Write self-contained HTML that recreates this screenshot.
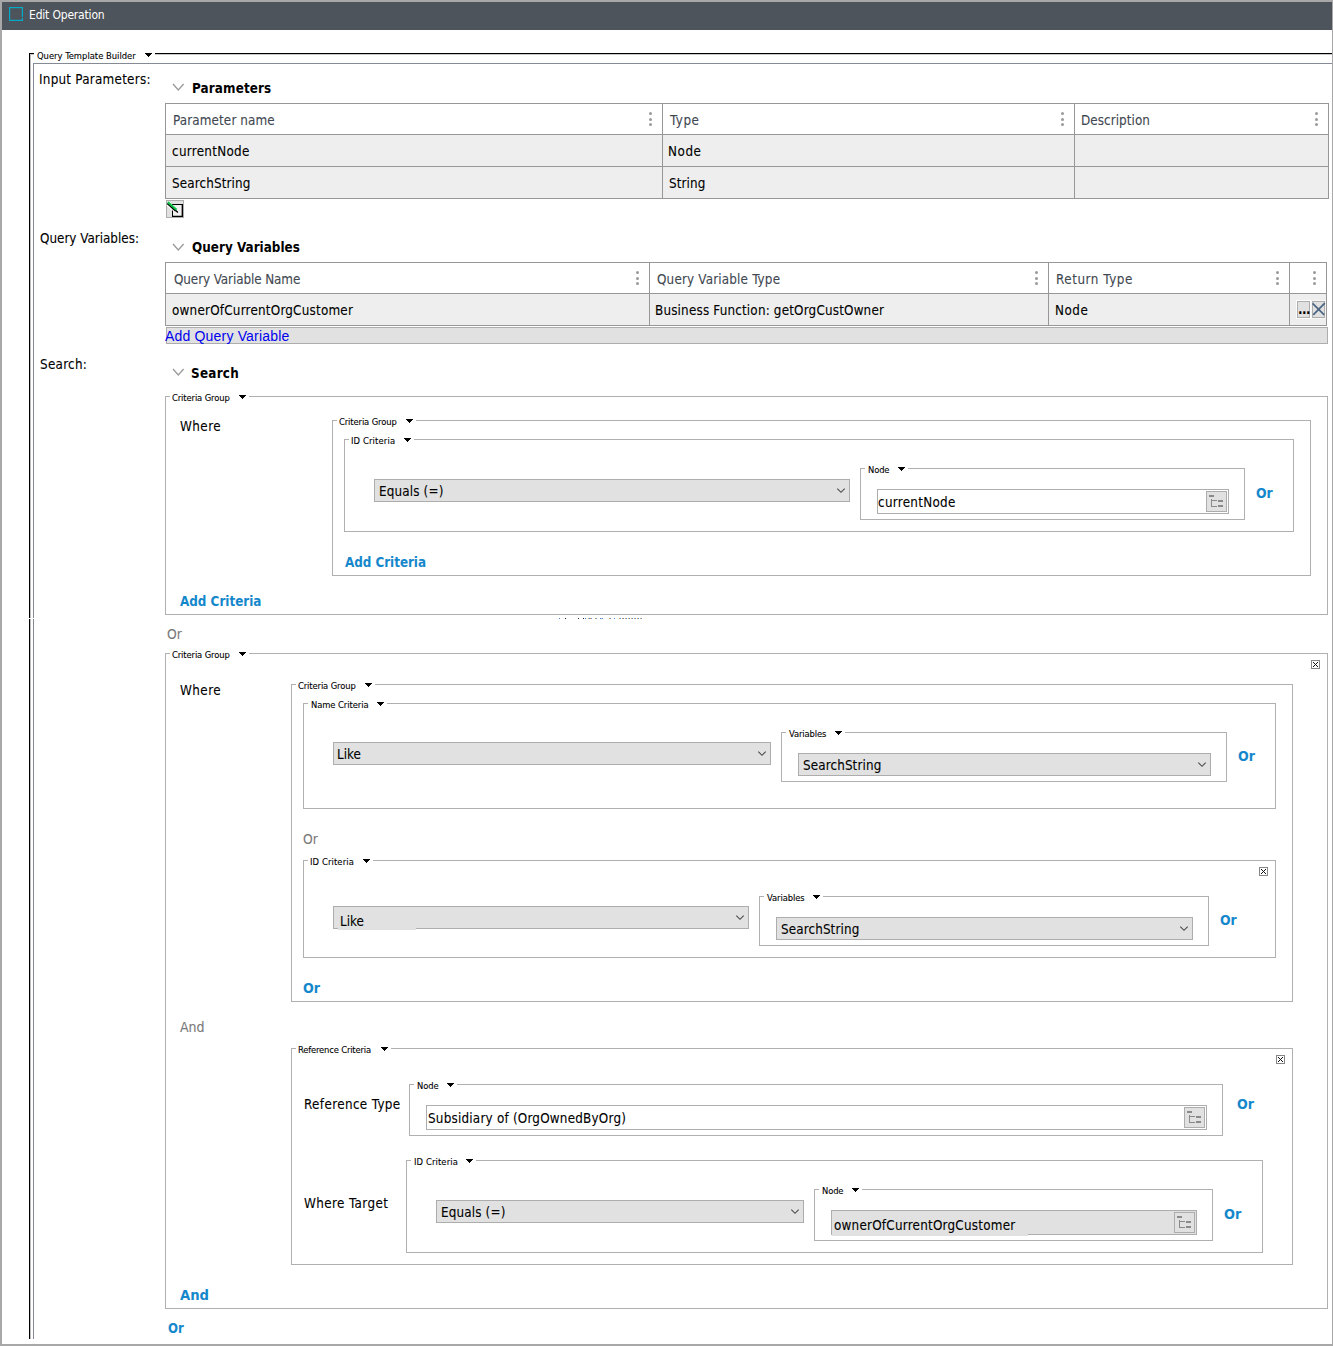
<!DOCTYPE html>
<html lang="en"><head><meta charset="utf-8"><title>Edit Operation</title>
<style>
html,body{margin:0;padding:0;background:#fff;}
body{width:1333px;height:1346px;position:relative;overflow:hidden;font-family:"DejaVu Sans Condensed","Liberation Sans",sans-serif;}
.a{position:absolute;box-sizing:content-box;}
.t{position:absolute;white-space:nowrap;height:20px;line-height:0;}
.t i{display:inline-block;width:0;height:20px;}
.b{-webkit-text-stroke:0.09px currentColor;}
.lg{-webkit-text-stroke:0.1px currentColor;}
.dot{width:3px;height:3px;border-radius:50%;background:#9a9a9a;}
svg{overflow:visible;}
</style></head>
<body>
<div class="a" style="left:0px;top:0px;width:1333px;height:2px;background:#a8a8a8;"></div>
<div class="a" style="left:0px;top:0px;width:2px;height:1346px;background:#a8a8a8;"></div>
<div class="a" style="left:1332px;top:0px;width:1px;height:1346px;background:#a8a8a8;"></div>
<div class="a" style="left:0px;top:1344px;width:1333px;height:2px;background:#a8a8a8;"></div>
<div class="a title" style="left:2px;top:2px;width:1330px;height:28px;background:#4d545b;"></div>
<svg class="a" style="left:9px;top:7px" width="14" height="14" viewBox="0 0 14 14"><rect x="0.6" y="0.6" width="12.8" height="12.8" fill="none" stroke="#00aac8" stroke-width="1.2"/><rect x="12.3" y="9.9" width="1.8" height="0.9" fill="#4d545b"/></svg>
<div class="a" style="left:29px;top:53px;width:1px;height:1286px;background:#000;"></div>
<div class="a" style="left:30px;top:54px;width:1px;height:1285px;background:#bdbdbd;"></div>
<div class="a" style="left:29px;top:53px;width:5px;height:1px;background:#000;"></div>
<div class="a" style="left:155px;top:53px;width:1177px;height:1px;background:#000;"></div>
<div class="a" style="left:30px;top:54px;width:4px;height:1px;background:#c8c8c8;"></div>
<div class="a" style="left:155px;top:54px;width:1177px;height:1px;background:#c8c8c8;"></div>
<svg class="a" style="left:144px;top:53px" width="8" height="4" viewBox="0 0 8 4" shape-rendering="crispEdges"><path d="M0 0H8L4.0 4Z" fill="#000"/></svg>
<div class="a" style="left:33px;top:63px;width:1px;height:1276px;background:#858b96;"></div>
<div class="a" style="left:33px;top:63px;width:1299px;height:1px;background:#858b96;"></div>
<div class="a" style="left:29px;top:618px;width:6px;height:1px;background:#fff;"></div>
<svg class="a" style="left:171.6px;top:83px" width="13" height="9" viewBox="-1 -1 13 9"><path d="M0 0L5.3 6L10.6 0" fill="none" stroke="#9a9a9a" stroke-width="1.3"/></svg>
<svg class="a" style="left:171.6px;top:242.5px" width="13" height="9" viewBox="-1 -1 13 9"><path d="M0 0L5.3 6L10.6 0" fill="none" stroke="#9a9a9a" stroke-width="1.3"/></svg>
<svg class="a" style="left:171.6px;top:368px" width="13" height="9" viewBox="-1 -1 13 9"><path d="M0 0L5.3 6L10.6 0" fill="none" stroke="#9a9a9a" stroke-width="1.3"/></svg>
<div class="a tbl" style="left:165px;top:103px;width:1162px;height:94px;background:#fff;border:1px solid #979797;"></div>
<div class="a" style="left:166px;top:135px;width:1162px;height:63px;background:#eeeeee;"></div>
<div class="a" style="left:165px;top:134px;width:1164px;height:1px;background:#979797;"></div>
<div class="a" style="left:165px;top:166px;width:1164px;height:1px;background:#979797;"></div>
<div class="a" style="left:662px;top:103px;width:1px;height:96px;background:#979797;"></div>
<div class="a" style="left:1074px;top:103px;width:1px;height:96px;background:#979797;"></div>
<div class="a dot" style="left:649.3px;top:112.0px"></div>
<div class="a dot" style="left:649.3px;top:117.5px"></div>
<div class="a dot" style="left:649.3px;top:123.0px"></div>
<div class="a dot" style="left:1061.3px;top:112.0px"></div>
<div class="a dot" style="left:1061.3px;top:117.5px"></div>
<div class="a dot" style="left:1061.3px;top:123.0px"></div>
<div class="a dot" style="left:1315.3px;top:112.0px"></div>
<div class="a dot" style="left:1315.3px;top:117.5px"></div>
<div class="a dot" style="left:1315.3px;top:123.0px"></div>
<div class="a btn" style="left:166px;top:200px;width:16px;height:16px;background:#e1e1e1;border:1px solid #adadad;"></div>
<svg class="a" style="left:166px;top:200px" width="18" height="18" viewBox="0 0 18 18"><rect x="6.5" y="4.5" width="10" height="12" fill="#f0f0f0" stroke="#000" stroke-width="1"/><path d="M16.3 4.5V16.7M6.5 16.4H16.7" stroke="#000" stroke-width="1.3" fill="none"/><path d="M0.9 4.9L7.0 10.3" stroke="#fff" stroke-width="1.3"/><path d="M1.2 3.5L9.6 10.9" stroke="#000" stroke-width="1.4"/><path d="M1.9 2.2L10.5 9.8" stroke="#00c03c" stroke-width="2.1"/><path d="M2.5 1.9L10.6 9.0" stroke="#4fdc80" stroke-width="0.6"/><path d="M9.4 10.3L11.9 12.5" stroke="#000" stroke-width="1.5"/></svg>
<div class="a tbl" style="left:165px;top:262px;width:1160px;height:62px;background:#fff;border:1px solid #979797;"></div>
<div class="a" style="left:166px;top:294px;width:1160px;height:31px;background:#eeeeee;"></div>
<div class="a" style="left:165px;top:293px;width:1162px;height:1px;background:#979797;"></div>
<div class="a" style="left:649px;top:262px;width:1px;height:64px;background:#979797;"></div>
<div class="a" style="left:1048px;top:262px;width:1px;height:64px;background:#979797;"></div>
<div class="a" style="left:1289px;top:262px;width:1px;height:64px;background:#979797;"></div>
<div class="a dot" style="left:635.9px;top:271.0px"></div>
<div class="a dot" style="left:635.9px;top:276.5px"></div>
<div class="a dot" style="left:635.9px;top:282.0px"></div>
<div class="a dot" style="left:1034.7px;top:271.0px"></div>
<div class="a dot" style="left:1034.7px;top:276.5px"></div>
<div class="a dot" style="left:1034.7px;top:282.0px"></div>
<div class="a dot" style="left:1275.9px;top:271.0px"></div>
<div class="a dot" style="left:1275.9px;top:276.5px"></div>
<div class="a dot" style="left:1275.9px;top:282.0px"></div>
<div class="a dot" style="left:1312.8px;top:271.0px"></div>
<div class="a dot" style="left:1312.8px;top:276.5px"></div>
<div class="a dot" style="left:1312.8px;top:282.0px"></div>
<div class="a" style="left:1296px;top:300px;width:15px;height:19px;background:#fff;"></div>
<div class="a" style="left:1311px;top:300px;width:15px;height:19px;background:#f6f6f6;"></div>
<div class="a btn" style="left:1297px;top:301px;width:11px;height:15px;background:#e1e1e1;border:1px solid #adadad;"></div>
<div class="a btn" style="left:1312px;top:301px;width:11px;height:15px;background:#e1e1e1;border:1px solid #adadad;"></div>
<svg class="a" style="left:1311px;top:300px" width="16" height="19" viewBox="0 0 16 19"><path d="M1.6 3.4L13.2 14.8" stroke="#4a6482" stroke-width="1.7"/><path d="M13.8 3.1L2.2 14.8" stroke="#4a6482" stroke-width="1.7"/></svg>
<div class="a bar" style="left:166px;top:327px;width:1160px;height:15px;background:#e1e1e1;border:1px solid #adadad;"></div>
<div class="a fs" style="left:165px;top:396px;width:1161px;height:217px;border:1px solid #b0b0b0;"></div>
<div class="a" style="left:170px;top:396px;width:79px;height:1px;background:#fff;"></div>
<svg class="a" style="left:238px;top:395px" width="8" height="4" viewBox="0 0 8 4" shape-rendering="crispEdges"><path d="M0 0H8L4.0 4Z" fill="#000"/></svg>
<div class="a fs" style="left:332px;top:420px;width:977px;height:154px;border:1px solid #b0b0b0;"></div>
<div class="a" style="left:337px;top:420px;width:79px;height:1px;background:#fff;"></div>
<svg class="a" style="left:405px;top:419px" width="8" height="4" viewBox="0 0 8 4" shape-rendering="crispEdges"><path d="M0 0H8L4.0 4Z" fill="#000"/></svg>
<div class="a fs" style="left:344px;top:439px;width:948px;height:91px;border:1px solid #b0b0b0;"></div>
<div class="a" style="left:349px;top:439px;width:65px;height:1px;background:#fff;"></div>
<svg class="a" style="left:403px;top:438px" width="8" height="4" viewBox="0 0 8 4" shape-rendering="crispEdges"><path d="M0 0H8L4.0 4Z" fill="#000"/></svg>
<div class="a sel" style="left:374px;top:479px;width:474px;height:21px;background:#e1e1e1;border:1px solid #adadad;"></div>
<svg class="a" style="left:837px;top:488px" width="8" height="5" viewBox="0 0 8 5"><path d="M0.3 0.6L4.0 4.3L7.7 0.6" fill="none" stroke="#4a4a4a" stroke-width="1.1"/></svg>
<div class="a fs" style="left:860px;top:468px;width:383px;height:50px;border:1px solid #b0b0b0;"></div>
<div class="a" style="left:865px;top:468px;width:43px;height:1px;background:#fff;"></div>
<svg class="a" style="left:897px;top:467px" width="8" height="4" viewBox="0 0 8 4" shape-rendering="crispEdges"><path d="M0 0H8L4.0 4Z" fill="#000"/></svg>
<div class="a inp" style="left:877px;top:489px;width:350px;height:23px;background:#fff;border:1px solid #adadad;"></div>
<div class="a btn" style="left:1206px;top:491px;width:19px;height:19px;background:#e1e1e1;border:1px solid #adadad;"></div>
<svg class="a" style="left:1206px;top:491px" width="21" height="21" viewBox="0 0 21 21" shape-rendering="crispEdges"><g fill="#8a8a8a"><rect x="3" y="4" width="5" height="2"/><rect x="5" y="8" width="1" height="8"/><rect x="5" y="9" width="6" height="1"/><rect x="5" y="15" width="6" height="1"/><rect x="12" y="9" width="5" height="2"/><rect x="12" y="14" width="5" height="2"/></g></svg>
<div class="a" style="left:559px;top:618px;width:1px;height:1px;background:#4a86d8;"></div>
<div class="a" style="left:565px;top:618px;width:1px;height:1px;background:#222;"></div>
<div class="a" style="left:578px;top:618px;width:1px;height:1px;background:#3a1a1a;"></div>
<div class="a" style="left:583px;top:618px;width:1px;height:1px;background:#222;"></div>
<div class="a" style="left:585px;top:618px;width:1px;height:1px;background:#4a86d8;"></div>
<div class="a" style="left:609px;top:618px;width:1px;height:1px;background:#d9a066;"></div>
<div class="a" style="left:610px;top:618px;width:1px;height:1px;background:#5a8fd0;"></div>
<div class="a" style="left:614px;top:618px;width:1px;height:1px;background:#5a8fd0;"></div>
<div class="a" style="left:595px;top:618px;width:1px;height:1px;background:#d9a066;"></div>
<div class="a" style="left:596px;top:618px;width:1px;height:1px;background:#5a8fd0;"></div>
<div class="a" style="left:588px;top:618px;width:4px;height:1px;background:repeating-linear-gradient(90deg,#d9a066 0 1px,#5a8fd0 1px 2px);"></div>
<div class="a" style="left:600px;top:618px;width:3px;height:1px;background:repeating-linear-gradient(90deg,#5a8fd0 0 1px,#9bb8e0 1px 2px);"></div>
<div class="a" style="left:619px;top:618px;width:24px;height:1px;background:repeating-linear-gradient(90deg,#d9a066 0 1px,#5a8fd0 1px 2px,#fff 2px 3px);"></div>
<div class="a fs" style="left:165px;top:653px;width:1161px;height:654px;border:1px solid #b0b0b0;"></div>
<div class="a" style="left:170px;top:653px;width:79px;height:1px;background:#fff;"></div>
<svg class="a" style="left:238px;top:652px" width="8" height="4" viewBox="0 0 8 4" shape-rendering="crispEdges"><path d="M0 0H8L4.0 4Z" fill="#000"/></svg>
<svg class="a" style="left:1311px;top:660px" width="9" height="9" viewBox="0 0 9 9" shape-rendering="crispEdges"><rect x="0.5" y="0.5" width="8" height="8" fill="#fff" stroke="#868686" stroke-width="1"/><g fill="#111"><rect x="2" y="2" width="1" height="1"/><rect x="6" y="2" width="1" height="1"/><rect x="3" y="3" width="1" height="1"/><rect x="5" y="3" width="1" height="1"/><rect x="4" y="4" width="1" height="1"/><rect x="4" y="4" width="1" height="1"/><rect x="5" y="5" width="1" height="1"/><rect x="3" y="5" width="1" height="1"/><rect x="6" y="6" width="1" height="1"/><rect x="2" y="6" width="1" height="1"/></g></svg>
<div class="a fs" style="left:291px;top:684px;width:1000px;height:316px;border:1px solid #b0b0b0;"></div>
<div class="a" style="left:296px;top:684px;width:79px;height:1px;background:#fff;"></div>
<svg class="a" style="left:364px;top:683px" width="8" height="4" viewBox="0 0 8 4" shape-rendering="crispEdges"><path d="M0 0H8L4.0 4Z" fill="#000"/></svg>
<div class="a fs" style="left:303px;top:703px;width:971px;height:104px;border:1px solid #b0b0b0;"></div>
<div class="a" style="left:308px;top:703px;width:79px;height:1px;background:#fff;"></div>
<svg class="a" style="left:376px;top:702px" width="8" height="4" viewBox="0 0 8 4" shape-rendering="crispEdges"><path d="M0 0H8L4.0 4Z" fill="#000"/></svg>
<div class="a sel" style="left:333px;top:742px;width:436px;height:21px;background:#e1e1e1;border:1px solid #adadad;"></div>
<svg class="a" style="left:758px;top:751px" width="8" height="5" viewBox="0 0 8 5"><path d="M0.3 0.6L4.0 4.3L7.7 0.6" fill="none" stroke="#4a4a4a" stroke-width="1.1"/></svg>
<div class="a fs" style="left:781px;top:732px;width:444px;height:48px;border:1px solid #b0b0b0;"></div>
<div class="a" style="left:786px;top:732px;width:59px;height:1px;background:#fff;"></div>
<svg class="a" style="left:834px;top:731px" width="8" height="4" viewBox="0 0 8 4" shape-rendering="crispEdges"><path d="M0 0H8L4.0 4Z" fill="#000"/></svg>
<div class="a sel" style="left:798px;top:753px;width:411px;height:21px;background:#e1e1e1;border:1px solid #adadad;"></div>
<svg class="a" style="left:1198px;top:762px" width="8" height="5" viewBox="0 0 8 5"><path d="M0.3 0.6L4.0 4.3L7.7 0.6" fill="none" stroke="#4a4a4a" stroke-width="1.1"/></svg>
<div class="a fs" style="left:303px;top:860px;width:971px;height:96px;border:1px solid #b0b0b0;"></div>
<div class="a" style="left:308px;top:860px;width:65px;height:1px;background:#fff;"></div>
<svg class="a" style="left:362px;top:859px" width="8" height="4" viewBox="0 0 8 4" shape-rendering="crispEdges"><path d="M0 0H8L4.0 4Z" fill="#000"/></svg>
<svg class="a" style="left:1259px;top:867px" width="9" height="9" viewBox="0 0 9 9" shape-rendering="crispEdges"><rect x="0.5" y="0.5" width="8" height="8" fill="#fff" stroke="#868686" stroke-width="1"/><g fill="#111"><rect x="2" y="2" width="1" height="1"/><rect x="6" y="2" width="1" height="1"/><rect x="3" y="3" width="1" height="1"/><rect x="5" y="3" width="1" height="1"/><rect x="4" y="4" width="1" height="1"/><rect x="4" y="4" width="1" height="1"/><rect x="5" y="5" width="1" height="1"/><rect x="3" y="5" width="1" height="1"/><rect x="6" y="6" width="1" height="1"/><rect x="2" y="6" width="1" height="1"/></g></svg>
<div class="a sel" style="left:333px;top:906px;width:414px;height:21px;background:#e1e1e1;border:1px solid #adadad;"></div>
<svg class="a" style="left:736px;top:915px" width="8" height="5" viewBox="0 0 8 5"><path d="M0.3 0.6L4.0 4.3L7.7 0.6" fill="none" stroke="#4a4a4a" stroke-width="1.1"/></svg>
<div class="a" style="left:338px;top:908px;width:78px;height:22px;background:#e1e1e1;"></div>
<div class="a fs" style="left:759px;top:896px;width:448px;height:48px;border:1px solid #b0b0b0;"></div>
<div class="a" style="left:764px;top:896px;width:59px;height:1px;background:#fff;"></div>
<svg class="a" style="left:812px;top:895px" width="8" height="4" viewBox="0 0 8 4" shape-rendering="crispEdges"><path d="M0 0H8L4.0 4Z" fill="#000"/></svg>
<div class="a sel" style="left:776px;top:917px;width:415px;height:21px;background:#e1e1e1;border:1px solid #adadad;"></div>
<svg class="a" style="left:1180px;top:926px" width="8" height="5" viewBox="0 0 8 5"><path d="M0.3 0.6L4.0 4.3L7.7 0.6" fill="none" stroke="#4a4a4a" stroke-width="1.1"/></svg>
<div class="a fs" style="left:291px;top:1048px;width:1000px;height:215px;border:1px solid #b0b0b0;"></div>
<div class="a" style="left:296px;top:1048px;width:95px;height:1px;background:#fff;"></div>
<svg class="a" style="left:380px;top:1047px" width="8" height="4" viewBox="0 0 8 4" shape-rendering="crispEdges"><path d="M0 0H8L4.0 4Z" fill="#000"/></svg>
<svg class="a" style="left:1276px;top:1055px" width="9" height="9" viewBox="0 0 9 9" shape-rendering="crispEdges"><rect x="0.5" y="0.5" width="8" height="8" fill="#fff" stroke="#868686" stroke-width="1"/><g fill="#111"><rect x="2" y="2" width="1" height="1"/><rect x="6" y="2" width="1" height="1"/><rect x="3" y="3" width="1" height="1"/><rect x="5" y="3" width="1" height="1"/><rect x="4" y="4" width="1" height="1"/><rect x="4" y="4" width="1" height="1"/><rect x="5" y="5" width="1" height="1"/><rect x="3" y="5" width="1" height="1"/><rect x="6" y="6" width="1" height="1"/><rect x="2" y="6" width="1" height="1"/></g></svg>
<div class="a fs" style="left:409px;top:1084px;width:812px;height:50px;border:1px solid #b0b0b0;"></div>
<div class="a" style="left:414px;top:1084px;width:43px;height:1px;background:#fff;"></div>
<svg class="a" style="left:446px;top:1083px" width="8" height="4" viewBox="0 0 8 4" shape-rendering="crispEdges"><path d="M0 0H8L4.0 4Z" fill="#000"/></svg>
<div class="a inp" style="left:426px;top:1105px;width:779px;height:23px;background:#fff;border:1px solid #adadad;"></div>
<div class="a btn" style="left:1184px;top:1107px;width:19px;height:19px;background:#e1e1e1;border:1px solid #adadad;"></div>
<svg class="a" style="left:1184px;top:1107px" width="21" height="21" viewBox="0 0 21 21" shape-rendering="crispEdges"><g fill="#8a8a8a"><rect x="3" y="4" width="5" height="2"/><rect x="5" y="8" width="1" height="8"/><rect x="5" y="9" width="6" height="1"/><rect x="5" y="15" width="6" height="1"/><rect x="12" y="9" width="5" height="2"/><rect x="12" y="14" width="5" height="2"/></g></svg>
<div class="a fs" style="left:406px;top:1160px;width:855px;height:91px;border:1px solid #b0b0b0;"></div>
<div class="a" style="left:411px;top:1160px;width:65px;height:1px;background:#fff;"></div>
<svg class="a" style="left:465px;top:1159px" width="8" height="4" viewBox="0 0 8 4" shape-rendering="crispEdges"><path d="M0 0H8L4.0 4Z" fill="#000"/></svg>
<div class="a sel" style="left:436px;top:1200px;width:366px;height:21px;background:#e1e1e1;border:1px solid #adadad;"></div>
<svg class="a" style="left:791px;top:1209px" width="8" height="5" viewBox="0 0 8 5"><path d="M0.3 0.6L4.0 4.3L7.7 0.6" fill="none" stroke="#4a4a4a" stroke-width="1.1"/></svg>
<div class="a fs" style="left:814px;top:1189px;width:397px;height:50px;border:1px solid #b0b0b0;"></div>
<div class="a" style="left:819px;top:1189px;width:43px;height:1px;background:#fff;"></div>
<svg class="a" style="left:851px;top:1188px" width="8" height="4" viewBox="0 0 8 4" shape-rendering="crispEdges"><path d="M0 0H8L4.0 4Z" fill="#000"/></svg>
<div class="a inp" style="left:831px;top:1210px;width:364px;height:23px;background:#e1e1e1;border:1px solid #adadad;"></div>
<div class="a btn" style="left:1174px;top:1212px;width:19px;height:19px;background:#e1e1e1;border:1px solid #adadad;"></div>
<svg class="a" style="left:1174px;top:1212px" width="21" height="21" viewBox="0 0 21 21" shape-rendering="crispEdges"><g fill="#8a8a8a"><rect x="3" y="4" width="5" height="2"/><rect x="5" y="8" width="1" height="8"/><rect x="5" y="9" width="6" height="1"/><rect x="5" y="15" width="6" height="1"/><rect x="12" y="9" width="5" height="2"/><rect x="12" y="14" width="5" height="2"/></g></svg>
<div class="a" style="left:832px;top:1212px;width:196px;height:24px;background:#e1e1e1;"></div>
<span class="t" style="left:29px;top:-1px;font-size:12px;color:#fff;letter-spacing:-0.185px;">Edit Operation<i></i></span>
<span class="t lg" style="left:37px;top:39px;font-size:9.33px;color:#000;">Query Template Builder<i></i></span>
<span class="t b" style="left:39px;top:64px;font-size:13.33px;color:#000;letter-spacing:0.250px;">Input Parameters:<i></i></span>
<span class="t b" style="left:40px;top:223px;font-size:13.33px;color:#000;">Query Variables:<i></i></span>
<span class="t b" style="left:40px;top:349px;font-size:13.33px;color:#000;letter-spacing:0.283px;">Search:<i></i></span>
<span class="t" style="left:192px;top:73px;font-size:13.33px;color:#000;font-weight:bold;letter-spacing:0.122px;">Parameters<i></i></span>
<span class="t" style="left:192px;top:232px;font-size:13.33px;color:#000;font-weight:bold;letter-spacing:0.029px;">Query Variables<i></i></span>
<span class="t" style="left:191px;top:358px;font-size:13.33px;color:#000;font-weight:bold;letter-spacing:0.260px;">Search<i></i></span>
<span class="t b" style="left:173px;top:105px;font-size:13.33px;color:#3f4851;letter-spacing:0.123px;">Parameter name<i></i></span>
<span class="t b" style="left:670px;top:105px;font-size:13.33px;color:#3f4851;letter-spacing:0.550px;">Type<i></i></span>
<span class="t b" style="left:1081px;top:105px;font-size:13.33px;color:#3f4851;letter-spacing:0.060px;">Description<i></i></span>
<span class="t b" style="left:172px;top:136px;font-size:13.33px;color:#000;letter-spacing:0.290px;">currentNode<i></i></span>
<span class="t b" style="left:668px;top:136px;font-size:13.33px;color:#000;letter-spacing:0.550px;">Node<i></i></span>
<span class="t b" style="left:172px;top:168px;font-size:13.33px;color:#000;letter-spacing:0.127px;">SearchString<i></i></span>
<span class="t b" style="left:669px;top:168px;font-size:13.33px;color:#000;letter-spacing:0.120px;">String<i></i></span>
<span class="t b" style="left:174px;top:264px;font-size:13.33px;color:#3f4851;letter-spacing:-0.089px;">Query Variable Name<i></i></span>
<span class="t b" style="left:657px;top:264px;font-size:13.33px;color:#3f4851;letter-spacing:0.178px;">Query Variable Type<i></i></span>
<span class="t b" style="left:1056px;top:264px;font-size:13.33px;color:#3f4851;letter-spacing:0.550px;">Return Type<i></i></span>
<span class="t b" style="left:172px;top:295px;font-size:13.33px;color:#000;letter-spacing:0.217px;">ownerOfCurrentOrgCustomer<i></i></span>
<span class="t b" style="left:655px;top:295px;font-size:13.33px;color:#000;letter-spacing:0.179px;">Business Function: getOrgCustOwner<i></i></span>
<span class="t b" style="left:1055px;top:295px;font-size:13.33px;color:#000;letter-spacing:0.533px;">Node<i></i></span>
<span class="t nofit" style="left:1298px;top:294px;font-size:13.33px;color:#000;font-weight:bold;letter-spacing:-0.5px;">...<i></i></span>
<span class="t" style="left:165px;top:321px;font-size:14px;color:#0000ee;font-family:'Liberation Sans',sans-serif;letter-spacing:0.182px;">Add Query Variable<i></i></span>
<span class="t lg" style="left:172px;top:381px;font-size:9.33px;color:#000;letter-spacing:-0.108px;">Criteria Group<i></i></span>
<span class="t b" style="left:180px;top:411px;font-size:13.33px;color:#000;letter-spacing:0.450px;">Where<i></i></span>
<span class="t lg" style="left:339px;top:405px;font-size:9.33px;color:#000;letter-spacing:-0.108px;">Criteria Group<i></i></span>
<span class="t lg" style="left:351px;top:424px;font-size:9.33px;color:#000;letter-spacing:0.140px;">ID Criteria<i></i></span>
<span class="t b" style="left:379px;top:476px;font-size:13.33px;color:#000;letter-spacing:0.156px;">Equals (=)<i></i></span>
<span class="t lg" style="left:868px;top:453px;font-size:9.33px;color:#000;letter-spacing:-0.133px;">Node<i></i></span>
<span class="t b" style="left:878px;top:487px;font-size:13.33px;color:#000;letter-spacing:0.290px;">currentNode<i></i></span>
<span class="t" style="left:1256px;top:478px;font-size:13.33px;color:#1587cb;font-weight:bold;transform:scaleX(1.037);transform-origin:0 0;">Or<i></i></span>
<span class="t" style="left:345px;top:547px;font-size:13.33px;color:#1587cb;font-weight:bold;letter-spacing:-0.036px;">Add Criteria<i></i></span>
<span class="t" style="left:180px;top:586px;font-size:13.33px;color:#1587cb;font-weight:bold;">Add Criteria<i></i></span>
<span class="t b" style="left:167px;top:619px;font-size:13.33px;color:#7a7a7a;transform:scaleX(1.029);transform-origin:0 0;">Or<i></i></span>
<span class="t lg" style="left:172px;top:638px;font-size:9.33px;color:#000;letter-spacing:-0.108px;">Criteria Group<i></i></span>
<span class="t b" style="left:180px;top:675px;font-size:13.33px;color:#000;letter-spacing:0.450px;">Where<i></i></span>
<span class="t lg" style="left:298px;top:669px;font-size:9.33px;color:#000;letter-spacing:-0.108px;">Criteria Group<i></i></span>
<span class="t lg" style="left:311px;top:688px;font-size:9.33px;color:#000;letter-spacing:-0.075px;">Name Criteria<i></i></span>
<span class="t b" style="left:337px;top:739px;font-size:13.33px;color:#000;letter-spacing:0.033px;">Like<i></i></span>
<span class="t lg" style="left:789px;top:717px;font-size:9.33px;color:#000;letter-spacing:-0.112px;">Variables<i></i></span>
<span class="t b" style="left:803px;top:750px;font-size:13.33px;color:#000;letter-spacing:0.118px;">SearchString<i></i></span>
<span class="t" style="left:1238px;top:741px;font-size:13.33px;color:#1587cb;font-weight:bold;transform:scaleX(1.05);transform-origin:0 0;">Or<i></i></span>
<span class="t b" style="left:303px;top:824px;font-size:13.33px;color:#7a7a7a;transform:scaleX(1.029);transform-origin:0 0;">Or<i></i></span>
<span class="t lg" style="left:310px;top:845px;font-size:9.33px;color:#000;letter-spacing:0.120px;">ID Criteria<i></i></span>
<span class="t b" style="left:340px;top:906px;font-size:13.33px;color:#000;letter-spacing:-0.033px;">Like<i></i></span>
<span class="t lg" style="left:767px;top:881px;font-size:9.33px;color:#000;letter-spacing:-0.075px;">Variables<i></i></span>
<span class="t b" style="left:781px;top:914px;font-size:13.33px;color:#000;letter-spacing:0.118px;">SearchString<i></i></span>
<span class="t" style="left:1220px;top:905px;font-size:13.33px;color:#1587cb;font-weight:bold;transform:scaleX(1.037);transform-origin:0 0;">Or<i></i></span>
<span class="t" style="left:303px;top:973px;font-size:13.33px;color:#1587cb;font-weight:bold;transform:scaleX(1.056);transform-origin:0 0;">Or<i></i></span>
<span class="t b" style="left:180px;top:1012px;font-size:13.33px;color:#7a7a7a;transform:scaleX(1.05);transform-origin:0 0;">And<i></i></span>
<span class="t lg" style="left:298px;top:1033px;font-size:9.33px;color:#000;letter-spacing:-0.165px;">Reference Criteria<i></i></span>
<span class="t b" style="left:304px;top:1089px;font-size:13.33px;color:#000;letter-spacing:0.369px;">Reference Type<i></i></span>
<span class="t lg" style="left:417px;top:1069px;font-size:9.33px;color:#000;letter-spacing:-0.100px;">Node<i></i></span>
<span class="t b" style="left:428px;top:1103px;font-size:13.33px;color:#000;letter-spacing:0.214px;">Subsidiary of (OrgOwnedByOrg)<i></i></span>
<span class="t" style="left:1237px;top:1089px;font-size:13.33px;color:#1587cb;font-weight:bold;transform:scaleX(1.056);transform-origin:0 0;">Or<i></i></span>
<span class="t lg" style="left:414px;top:1145px;font-size:9.33px;color:#000;letter-spacing:0.120px;">ID Criteria<i></i></span>
<span class="t b" style="left:304px;top:1188px;font-size:13.33px;color:#000;letter-spacing:0.400px;">Where Target<i></i></span>
<span class="t b" style="left:441px;top:1197px;font-size:13.33px;color:#000;letter-spacing:0.156px;">Equals (=)<i></i></span>
<span class="t lg" style="left:822px;top:1174px;font-size:9.33px;color:#000;letter-spacing:-0.133px;">Node<i></i></span>
<span class="t b" style="left:834px;top:1210px;font-size:13.33px;color:#000;letter-spacing:0.229px;">ownerOfCurrentOrgCustomer<i></i></span>
<span class="t" style="left:1224px;top:1199px;font-size:13.33px;color:#1587cb;font-weight:bold;transform:scaleX(1.075);transform-origin:0 0;">Or<i></i></span>
<span class="t" style="left:180px;top:1280px;font-size:13.33px;color:#1587cb;font-weight:bold;transform:scaleX(1.1);transform-origin:0 0;">And<i></i></span>
<span class="t" style="left:168px;top:1313px;font-size:13.33px;color:#1587cb;font-weight:bold;transform:scaleX(0.981);transform-origin:0 0;">Or<i></i></span>
</body></html>
